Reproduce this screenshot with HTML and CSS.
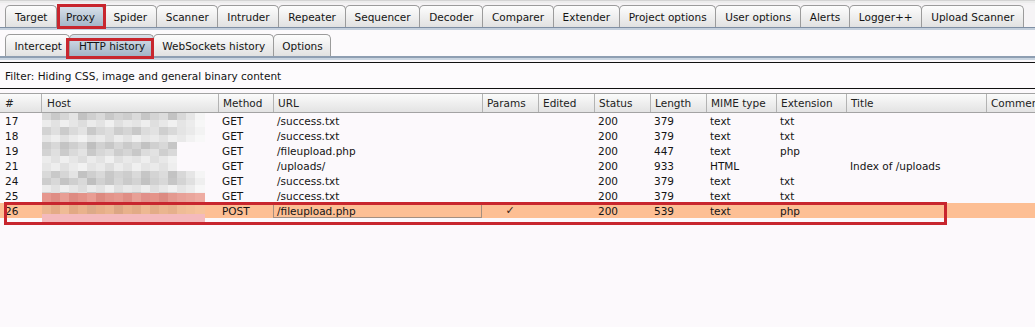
FILE: index.html
```html
<!DOCTYPE html>
<html>
<head>
<meta charset="utf-8">
<link rel="stylesheet" href="styles.css">
</head>
<body>
<div class="app">
  <div class="topstrip"></div>
  <nav class="tabs main-tabs">
    <div class="tab">Target</div>
    <div class="tab active">Proxy</div>
    <div class="tab">Spider</div>
    <div class="tab">Scanner</div>
    <div class="tab">Intruder</div>
    <div class="tab">Repeater</div>
    <div class="tab">Sequencer</div>
    <div class="tab">Decoder</div>
    <div class="tab">Comparer</div>
    <div class="tab">Extender</div>
    <div class="tab">Project options</div>
    <div class="tab">User options</div>
    <div class="tab">Alerts</div>
    <div class="tab">Logger++</div>
    <div class="tab">Upload Scanner</div>
  </nav>
  <section class="proxy-panel">
    <nav class="tabs sub-tabs">
      <div class="tab">Intercept</div>
      <div class="tab active">HTTP history</div>
      <div class="tab">WebSockets history</div>
      <div class="tab">Options</div>
    </nav>
  </section>
  <div class="filter">Filter: Hiding CSS, image and general binary content</div>
  <div class="table">
    <div class="row head">
      <div class="c">#</div><div class="c">Host</div><div class="c">Method</div><div class="c">URL</div><div class="c">Params</div><div class="c">Edited</div><div class="c">Status</div><div class="c">Length</div><div class="c">MIME type</div><div class="c">Extension</div><div class="c">Title</div><div class="c">Comment</div>
    </div>
    <div class="row">
      <div class="c">17</div><div class="c"></div><div class="c">GET</div><div class="c">/success.txt</div><div class="c"></div><div class="c"></div><div class="c">200</div><div class="c">379</div><div class="c">text</div><div class="c">txt</div><div class="c"></div><div class="c"></div>
    </div>
    <div class="row">
      <div class="c">18</div><div class="c"></div><div class="c">GET</div><div class="c">/success.txt</div><div class="c"></div><div class="c"></div><div class="c">200</div><div class="c">379</div><div class="c">text</div><div class="c">txt</div><div class="c"></div><div class="c"></div>
    </div>
    <div class="row">
      <div class="c">19</div><div class="c"></div><div class="c">GET</div><div class="c">/fileupload.php</div><div class="c"></div><div class="c"></div><div class="c">200</div><div class="c">447</div><div class="c">text</div><div class="c">php</div><div class="c"></div><div class="c"></div>
    </div>
    <div class="row">
      <div class="c">21</div><div class="c"></div><div class="c">GET</div><div class="c">/uploads/</div><div class="c"></div><div class="c"></div><div class="c">200</div><div class="c">933</div><div class="c">HTML</div><div class="c"></div><div class="c">Index of /uploads</div><div class="c"></div>
    </div>
    <div class="row">
      <div class="c">24</div><div class="c"></div><div class="c">GET</div><div class="c">/success.txt</div><div class="c"></div><div class="c"></div><div class="c">200</div><div class="c">379</div><div class="c">text</div><div class="c">txt</div><div class="c"></div><div class="c"></div>
    </div>
    <div class="row">
      <div class="c">25</div><div class="c"></div><div class="c">GET</div><div class="c">/success.txt</div><div class="c"></div><div class="c"></div><div class="c">200</div><div class="c">379</div><div class="c">text</div><div class="c">txt</div><div class="c"></div><div class="c"></div>
    </div>
    <div class="row sel">
      <div class="c">26</div><div class="c"></div><div class="c">POST</div><div class="c focus">/fileupload.php</div><div class="c check">✓</div><div class="c"></div><div class="c">200</div><div class="c">539</div><div class="c">text</div><div class="c">php</div><div class="c"></div><div class="c"></div>
    </div>
  </div>

  <div class="mosaic">
    <div class="strip p1"></div>
    <div class="strip p2"></div>
    <div class="strip p3"></div>
    <div class="strip p2b"></div>
    <div class="strip p4 narrow"></div>
    <div class="strip p3 narrow"></div>
    <div class="strip p2 narrow"></div>
    <div class="strip p2b narrow"></div>
    <div class="strip p1"></div>
    <div class="strip p4"></div>
    <div class="strip p2"></div>
    <div class="strip p3 half"></div>
    <div class="strip red"></div>
    <div class="strip tan"></div>
    <div class="strip pink"></div>
  </div>

  <div class="mark mark-proxy"></div>
  <div class="mark mark-http"></div>
  <div class="mark mark-row"></div>
</div>
</body>
</html>
```

FILE: styles.css
```css
html, body {
  margin: 0;
  padding: 0;
}
body {
  background: #fcf9fc;
  font-family: "DejaVu Sans", sans-serif;
  font-size: 10.5px;
  color: #141414;
}
.app {
  position: relative;
  width: 1035px;
  height: 327px;
  overflow: hidden;
}
.topstrip {
  height: 5px;
  background: linear-gradient(#d4d4d4 0 1px, #ececec 1px 3px, #f4f2f4 3px);
}
.tabs {
  display: flex;
  height: 22px;
}
.main-tabs {
  padding-left: 5px;
  background: #f6f4f6;
  border-bottom: 1px solid #7f8fa4;
}
.tab {
  box-sizing: border-box;
  height: 100%;
  display: flex;
  align-items: center;
  padding: 0 8px 0 9px;
  border: 1px solid #9b9b9b;
  border-bottom: none;
  border-radius: 5px 5px 0 0;
  background: linear-gradient(#fdfdfd, #e1e1e1);
  margin-right: -1px;
  white-space: nowrap;
}
.main-tabs .tab {
  padding: 0 8.6px 0 9px;
}
.tab.active {
  background: linear-gradient(#d9e2eb, #a2b4c7);
}
.proxy-panel {
  background: #fcfafc;
  border-top: 2px solid #c4cfdc;
  border-bottom: 2px solid #8e9eb2;
  box-shadow: 0 2px 0 #c9d4e0;
  padding: 4px 0 0 5px;
}
.sub-tabs .tab {
  padding: 0 7.5px 0 8.5px;
}
.filter {
  margin-top: 4px;
  height: 25px;
  line-height: 26px;
  padding-left: 5px;
  border-top: 1px solid #111;
  border-bottom: 1px solid #111;
  background: #fdfbfd;
}
.table {
  margin-top: 4px;
}
.row {
  display: grid;
  grid-template-columns: 41px 177px 55px 209px 56px 56px 56px 56px 70px 70px 140px 1fr;
  height: 15px;
  line-height: 16px;
}
.c {
  padding-left: 4px;
  white-space: nowrap;
  overflow: hidden;
}
.row .c:first-child {
  padding-left: 5px;
}
.head {
  box-sizing: border-box;
  height: 20px;
  line-height: 18px;
  border-top: 1px solid #a3a3a3;
  border-bottom: 1px solid #a3a3a3;
  background: linear-gradient(#fbfbfb, #e3e3e3);
  color: #222;
}
.head .c + .c {
  border-left: 1px solid #b3b3b3;
}
.head .c:nth-child(2) {
  padding-left: 5px;
}
.row.sel {
  background: #fdbf94;
}
.focus {
  box-sizing: border-box;
  border: 1px solid #a58f80;
  line-height: 14px;
  padding-left: 3px;
}
.check {
  text-align: center;
  padding-left: 0;
  color: #3a2418;
  font-size: 11px;
}

/* redaction mosaic over the Host column */
.mosaic {
  position: absolute;
  left: 42px;
  top: 113px;
  width: 163px;
  display: flex;
  flex-direction: column;
}
.strip {
  height: 7.2px;
  width: 163px;
}
.strip.narrow { width: 135px; }
.strip.half { height: 0.6px; }
.p1 {
  background: linear-gradient(90deg, #d9d9d9 0 9px, #c9c9c9 9px 18px, #d6d6d6 18px 27px, #e4e4e4 27px 36px, #c2c2c2 36px 45px, #cfcfcf 45px 54px, #d9d9d9 54px 63px, #c8c8c8 63px 72px, #d3d3d3 72px 81px, #cdcdcd 81px 90px, #dadada 90px 99px, #c6c6c6 99px 108px, #d4d4d4 108px 117px, #dcdcdc 117px 126px, #c3c3c3 126px 135px, #d8d8d8 135px 144px, #e6e6e6 144px 153px, #f5f5f5 153px 163px);
}
.p2 {
  background: linear-gradient(90deg, #ececec 0 9px, #e2e2e2 9px 18px, #efefef 18px 27px, #e6e6e6 27px 36px, #dddddd 36px 45px, #ebebeb 45px 54px, #e3e3e3 54px 63px, #f0f0f0 63px 72px, #e0e0e0 72px 81px, #e9e9e9 81px 90px, #e4e4e4 90px 99px, #eeeeee 99px 108px, #dfdfdf 108px 117px, #e8e8e8 117px 126px, #f1f1f1 126px 135px, #e5e5e5 135px 144px, #ececec 144px 153px, #f7f7f7 153px 163px);
}
.p2b {
  background: linear-gradient(90deg, #e6e6e6 0 9px, #eeeeee 9px 18px, #e1e1e1 18px 27px, #ebebeb 27px 36px, #f2f2f2 36px 45px, #e4e4e4 45px 54px, #eaeaea 54px 63px, #dedede 63px 72px, #ececec 72px 81px, #e3e3e3 81px 90px, #f0f0f0 90px 99px, #e5e5e5 99px 108px, #eaeaea 108px 117px, #e2e2e2 117px 126px, #eeeeee 126px 135px, #e9e9e9 135px 144px, #f2f2f2 144px 153px, #f8f8f8 153px 163px);
}
.p3 {
  background: linear-gradient(90deg, #d3d3d3 0 9px, #dfdfdf 9px 18px, #cbcbcb 18px 27px, #dadada 27px 36px, #e3e3e3 36px 45px, #c9c9c9 45px 54px, #d7d7d7 54px 63px, #dedede 63px 72px, #cdcdcd 72px 81px, #d5d5d5 81px 90px, #c8c8c8 90px 99px, #dcdcdc 99px 108px, #e2e2e2 108px 117px, #cfcfcf 117px 126px, #d9d9d9 126px 135px, #e4e4e4 135px 144px, #eaeaea 144px 153px, #f3f3f3 153px 163px);
}
.p4 {
  background: linear-gradient(90deg, #cdcdcd 0 9px, #d8d8d8 9px 18px, #c4c4c4 18px 27px, #cfcfcf 27px 36px, #d9d9d9 36px 45px, #bfbfbf 45px 54px, #d1d1d1 54px 63px, #c7c7c7 63px 72px, #d6d6d6 72px 81px, #cacaca 81px 90px, #d3d3d3 90px 99px, #c2c2c2 99px 108px, #d0d0d0 108px 117px, #d8d8d8 117px 126px, #c6c6c6 126px 135px, #d4d4d4 135px 144px, #e0e0e0 144px 153px, #efefef 153px 163px);
}
.red {
  height: 11px;
  background: linear-gradient(90deg, #e6978e 0 9px, #df8d84 9px 18px, #e89e94 18px 27px, #de8b82 27px 36px, #e49288 36px 45px, #e99d93 45px 54px, #dd8a80 54px 63px, #e3948a 63px 72px, #e6998f 72px 81px, #df8e85 81px 90px, #e8a096 90px 99px, #e1908a 99px 108px, #e59489 108px 117px, #dc8b82 117px 126px, #e49a90 126px 135px, #e8a198 135px 144px, #eaa69c 144px 153px, #eeaca2 153px 163px);
}
.tan {
  height: 10px;
  background: linear-gradient(90deg, #ebb690 0 9px, #e4ab86 9px 18px, #efbb95 18px 27px, #e2a984 27px 36px, #e9b28c 36px 45px, #ddaa88 45px 54px, #e6ae88 54px 63px, #eab48e 63px 72px, #dca683 72px 81px, #e8b18b 81px 90px, #e2ab86 90px 99px, #edb892 99px 108px, #e3ac87 108px 117px, #eab58f 117px 126px, #e6b08b 126px 135px, #efbc96 135px 144px, #f2bf98 144px 153px, #f6c29b 153px 163px);
}
.pink {
  height: 10px;
  background: #f4babd;
}

/* red annotation boxes */
.mark {
  position: absolute;
  box-sizing: border-box;
  border: 3px solid #c8262e;
}
.mark-proxy {
  left: 57px;
  top: 4px;
  width: 49px;
  height: 25px;
}
.mark-http {
  left: 66px;
  top: 38px;
  width: 88px;
  height: 21px;
}
.mark-row {
  left: 4px;
  top: 202px;
  width: 943px;
  height: 23px;
}
```
